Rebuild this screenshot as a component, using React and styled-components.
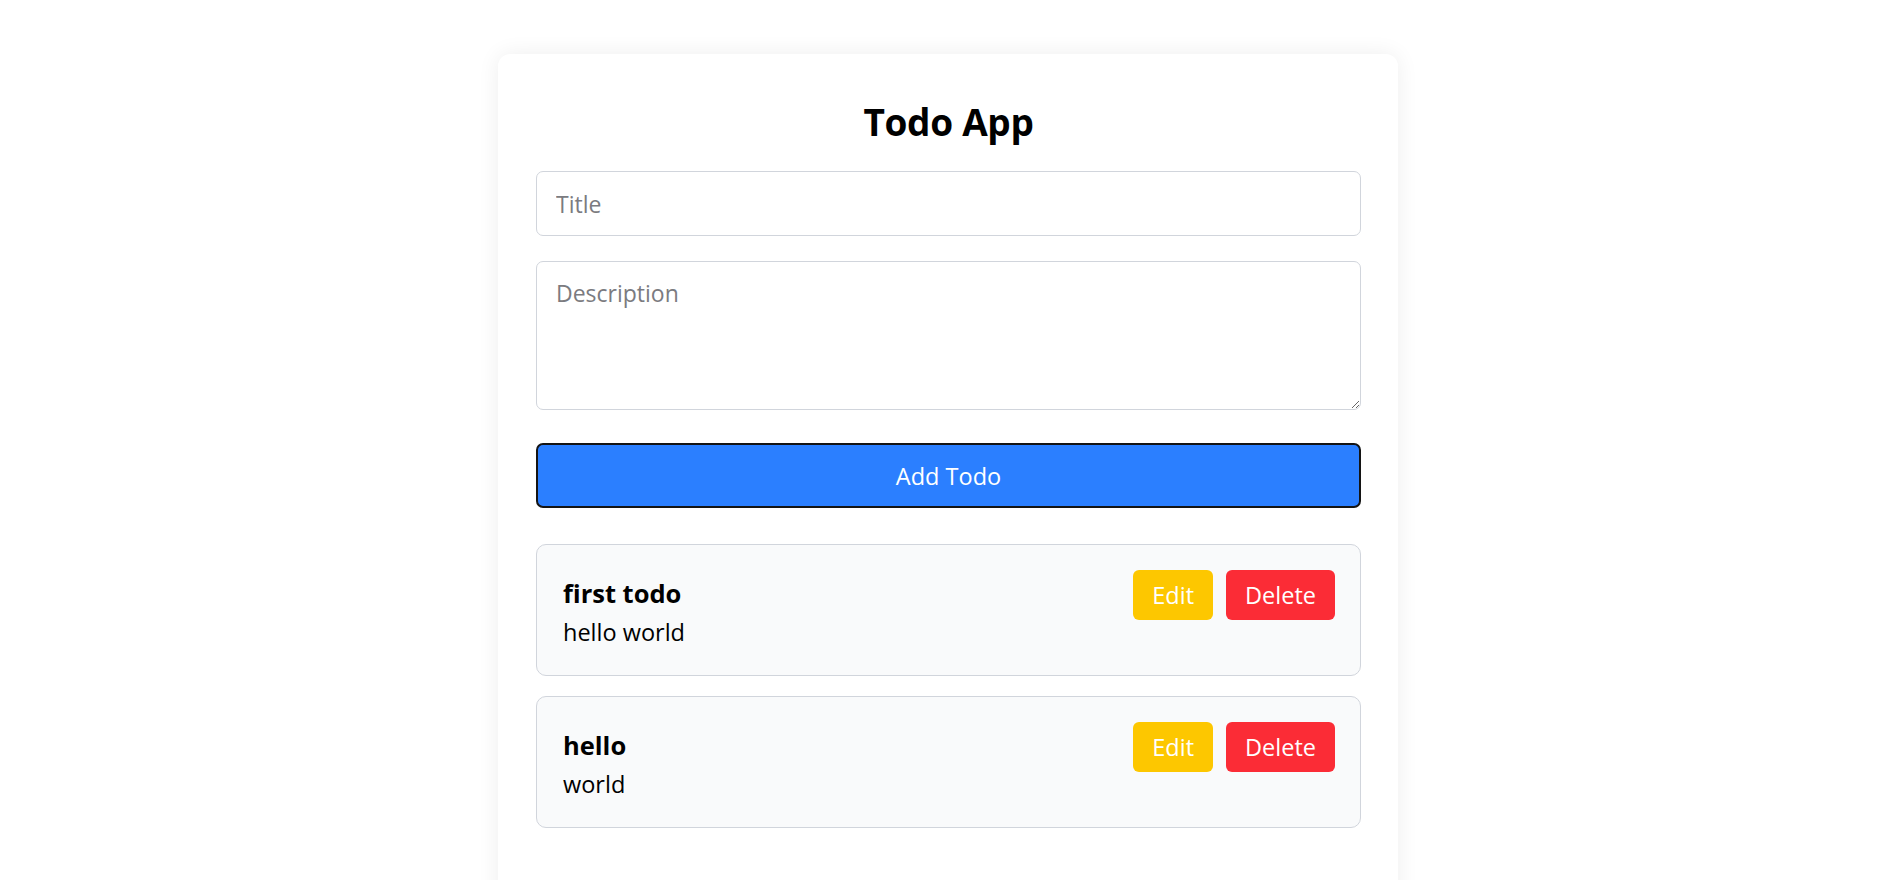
import React from "react";
import styled, { createGlobalStyle } from "styled-components";

const GlobalStyle = createGlobalStyle`
  * { box-sizing: border-box; }
  html, body { margin: 0; padding: 0; background: #ffffff; }
  body {
    font-family: "Open Sans", "Noto Sans", "Liberation Sans", sans-serif;
    color: #000000;
    overflow: hidden;
  }
`;

const Page = styled.div`
  display: flex;
  justify-content: center;
  padding: 54px 0 0 15px;
  min-height: 880px;
`;

const Card = styled.div`
  width: 900px;
  min-height: 860px;
  background: #ffffff;
  border-radius: 12px;
  box-shadow: 0 0 22px rgba(0, 0, 0, 0.07);
  padding: 44px 37px 40px 38px;
  display: flex;
  flex-direction: column;
`;

const Heading = styled.h1`
  margin: 0 0 25px;
  text-align: center;
  font-size: 37px;
  line-height: 48px;
  font-weight: 700;
  letter-spacing: -0.3px;
`;

const Form = styled.form`
  display: flex;
  flex-direction: column;
`;

const fieldBase = `
  width: 100%;
  border: 1px solid #d1d5dc;
  border-radius: 7px;
  background: #ffffff;
  font-family: "Open Sans", "Noto Sans", sans-serif;
  font-size: 23px;
  color: #000;
  outline: none;
  &::placeholder { color: #7b7b80; }
`;

const TextInput = styled.input`
  ${fieldBase}
  height: 65px;
  padding: 0 19px;
  margin-bottom: 25px;
`;

const TextArea = styled.textarea`
  ${fieldBase}
  height: 149px;
  padding: 16px 19px;
  line-height: 30px;
  resize: vertical;
  display: block;
  margin-bottom: 33px;
`;

const AddButton = styled.button`
  height: 65px;
  width: 100%;
  border: 2px solid #141414;
  border-radius: 7px;
  background: #2b7fff;
  color: #ffffff;
  font-family: "Open Sans", "Noto Sans", sans-serif;
  font-size: 23.5px;
  cursor: pointer;
  margin-bottom: 36px;
`;

const List = styled.ul`
  list-style: none;
  margin: 0;
  padding: 0;
  display: flex;
  flex-direction: column;
  gap: 20px;
`;

const Item = styled.li`
  display: flex;
  justify-content: space-between;
  align-items: flex-start;
  background: #f9fafb;
  border: 1px solid #d1d5dc;
  border-radius: 10px;
  padding: 25px 25px 25px 26px;
  height: 132px;
`;

const ItemText = styled.div`
  display: flex;
  flex-direction: column;
  padding-top: 2px;
`;

const ItemTitle = styled.h3`
  margin: 0;
  font-size: 25.5px;
  font-weight: 700;
  line-height: 42px;
`;

const ItemDesc = styled.p`
  margin: 0;
  font-size: 23.5px;
  line-height: 36px;
`;

const Actions = styled.div`
  display: flex;
  gap: 13px;
`;

const ActionButton = styled.button`
  height: 50px;
  padding: 0 19px;
  border: none;
  border-radius: 6px;
  background: ${(p) => (p.$variant === "danger" ? "#fb2c36" : "#fdc700")};
  color: #ffffff;
  font-family: "Open Sans", "Noto Sans", sans-serif;
  font-size: 23.5px;
  cursor: pointer;
`;

const todos = [
  { id: 1, title: "first todo", description: "hello world" },
  { id: 2, title: "hello", description: "world" },
];

export default function App() {
  return (
    <>
      <GlobalStyle />
      <Page>
        <Card>
          <Heading>Todo App</Heading>
          <Form onSubmit={(e) => e.preventDefault()}>
            <TextInput placeholder="Title" />
            <TextArea placeholder="Description" />
            <AddButton type="submit">Add Todo</AddButton>
          </Form>
          <List>
            {todos.map((t) => (
              <Item key={t.id}>
                <ItemText>
                  <ItemTitle>{t.title}</ItemTitle>
                  <ItemDesc>{t.description}</ItemDesc>
                </ItemText>
                <Actions>
                  <ActionButton>Edit</ActionButton>
                  <ActionButton $variant="danger">Delete</ActionButton>
                </Actions>
              </Item>
            ))}
          </List>
        </Card>
      </Page>
    </>
  );
}
